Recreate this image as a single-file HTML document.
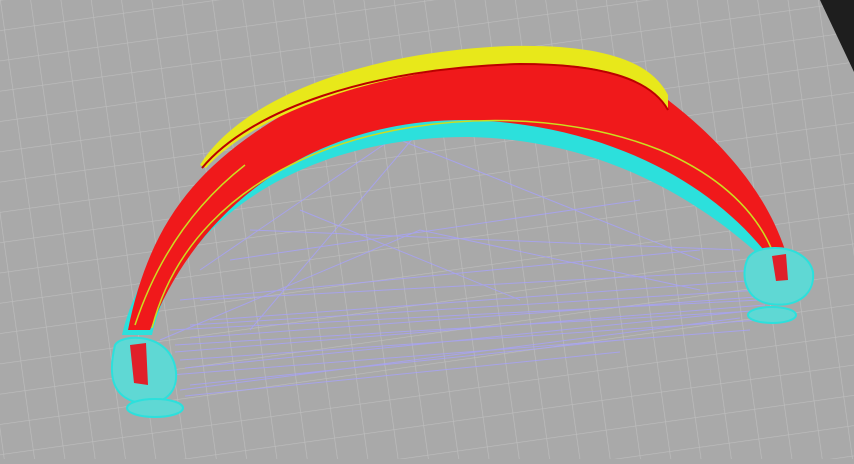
<!DOCTYPE html>
<html><head><style>html,body{margin:0;padding:0;background:#a9a9a9;overflow:hidden}</style></head>
<body>
<svg width="854" height="459" viewBox="0 0 854 459" xmlns="http://www.w3.org/2000/svg">
<defs>
<pattern id="g" width="30" height="30" patternUnits="userSpaceOnUse" patternTransform="rotate(-8)">
<rect width="30" height="30" fill="#a9a9a9"/>
<path d="M0 0H30M0 0V30" stroke="#bebebe" stroke-width="1.3"/>
</pattern>
</defs>
<rect width="854" height="459" fill="url(#g)"/>
<polygon points="820,0 854,0 854,72" fill="#1e1e1e"/>
<g stroke="#a7a2ff" stroke-width="1" opacity="0.75" fill="none">
<path d="M170 330 L760 300 M175 345 L770 310 M180 360 L760 320 M170 375 L750 330 M190 385 L620 340 M180 300 L700 250 M200 270 L420 120 M230 260 L640 200 M250 230 L740 250 M300 210 L520 300 M400 140 L700 260 M420 130 L250 330 M600 150 L780 240 M160 340 L420 230 L700 290 M210 320 L760 280 M185 368 L740 312 M175 352 L765 305 M190 338 L770 296 M180 390 L740 318 M185 396 L620 352 M200 300 L760 270 M190 325 L760 290"/>
</g>
<path d="M122 335 C150 210 300 118 470 120 C610 122 720 180 785 255 L770 265 C700 198 600 140 470 137 C310 136 180 215 152 335 Z" fill="#2ce0dc"/>
<path d="M128 330 C150 220 200 160 300 105 C380 62 470 46 540 48 C600 50 640 62 668 100 C720 140 765 190 785 250 L770 258 C715 185 610 125 470 120 C320 118 200 200 150 330 Z" fill="#f0191b"/>
<path d="M200 165 C240 100 360 52 510 46 C600 44 650 60 668 95 L668 110 C650 78 600 62 520 64 C370 68 250 118 206 168 Z" fill="#e8e81a"/>
<path d="M202 168 C250 110 370 68 520 64 C600 64 650 78 668 110" fill="none" stroke="#b00" stroke-width="2"/>
<path d="M152 328 C172 250 230 185 330 148 C430 112 560 110 660 150 C720 176 755 210 772 250" fill="none" stroke="#cddc20" stroke-width="1.5"/>
<path d="M135 325 C160 250 200 200 245 165" fill="none" stroke="#cddc20" stroke-width="1.5"/>
<g fill="#5fd8d4" stroke="#2ce0dc" stroke-width="2">
<path d="M115 345 C108 375 112 395 135 402 C160 408 178 395 176 372 C174 352 160 340 140 338 C128 337 118 340 115 345Z"/>
<ellipse cx="155" cy="408" rx="28" ry="9"/>
<path d="M748 258 C740 275 745 300 770 304 C800 308 815 292 813 272 C810 258 795 248 775 248 C760 248 752 252 748 258Z"/>
<ellipse cx="772" cy="315" rx="24" ry="8"/>
</g>
<path d="M130 345 L146 343 L148 385 L134 383Z" fill="#e0202a"/>
<path d="M772 256 L786 254 L788 280 L776 281Z" fill="#e0202a"/>
</svg>
</body></html>
